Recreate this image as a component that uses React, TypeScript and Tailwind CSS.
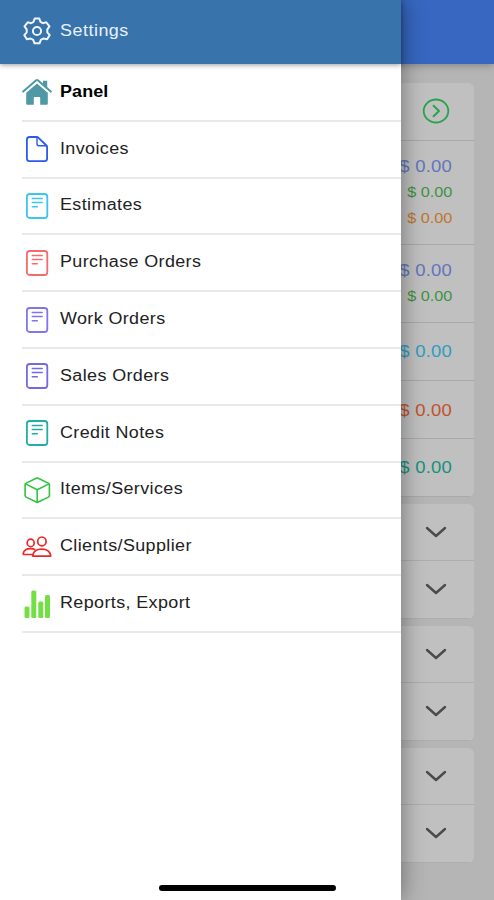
import { ReactNode } from "react"
import clsx from "clsx"

const outline = {
  viewBox: "0 0 30 30",
  fill: "none",
  stroke: "currentColor",
  strokeLinecap: "round",
  strokeLinejoin: "round",
} as const

function GearIcon() {
  return (
    <svg {...outline} strokeWidth="2" className="size-[30px] text-[#eef5fc]">
      <path d="M12.7 2.6h4.600l1.200 3.300 2.300 1.300 3.500-.9 3.200 4.100-2.200 3v3l2.400 2.700-2.600 4.200-3.800-.8-2.500 1.400-1.300 3.400h-5l-1.300-3.400-2.500-1.400-3.800.8-2.600-4.200 2.400-2.700v-3l-2.200-3 3.200-4.100 3.500.9 2.300-1.300z" />
      <circle cx="15" cy="15" r="4.1" />
    </svg>
  )
}

function HouseIcon() {
  return (
    <svg viewBox="0 0 30 30" className="size-[30px] text-[#4f98a5]">
      <path
        fill="currentColor"
        d="M15 6.600 4.200 15.800v10.700c0 .8.5 1.300 1.300 1.300h6.300v-7c0-.5.3-.8.8-.8h4.800c.5 0 .8.3.8.8v7h6.300c.8 0 1.300-.5 1.300-1.300V15.800z"
      />
      <path fill="currentColor" d="M21 3.800h4.200v8.400l-4.200-3.500z" />
      <path
        d="M1.200 14.600 13.900 3.400c.7-.6 1.500-.6 2.200 0l12.700 11.200"
        fill="none"
        stroke="currentColor"
        strokeWidth="2"
        strokeLinecap="round"
      />
      <path d="M3 15.900 15 5.500l12 10.400" fill="none" stroke="white" strokeWidth=".7" />
    </svg>
  )
}

function FileIcon() {
  return (
    <svg {...outline} strokeWidth="1.8" className="size-[30px] text-[#2b5be8]">
      <path d="M7.500 3h7.300c.6 0 1.100.2 1.500.6l8.100 7.900c.5.5.7 1 .7 1.600v11.400c0 1.600-1 2.600-2.600 2.600h-15c-1.600 0-2.600-1-2.600-2.600V5.600C4.900 4 5.900 3 7.500 3z" />
      <path d="M15 3.200v6.600c0 1.200.7 2 2 2h7.600" strokeWidth="1.400" />
    </svg>
  )
}

function DocIcon({ color }: { color: string }) {
  return (
    <svg {...outline} strokeWidth="1.8" className={clsx("size-[30px]", color)}>
      <rect x="4.9" y="3" width="20.4" height="24" rx="2.8" />
      <path d="M10.300 7.500h9.900M10.300 11.500h9.900M10.300 15.700h5" strokeWidth="1.500" />
    </svg>
  )
}

function BoxIcon() {
  return (
    <svg {...outline} strokeWidth="1.6" className="size-[30px] text-[#2fc440]">
      <path d="M14.200 3.200c.7-.3 1.300-.3 2 0l10.100 4.900c.8.4 1.100.9 1.100 1.700v10.700c0 .7-.3 1.200-1 1.600l-10.100 4.900c-.7.4-1.300.4-2 0L4.100 22.100c-.7-.4-1-.9-1-1.600V9.800c0-.8.3-1.300 1.100-1.700z" />
      <path d="m3.500 8.900 11.700 5.800 11.800-5.800M15.200 14.700V27" />
    </svg>
  )
}

function PeopleIcon() {
  return (
    <svg {...outline} strokeWidth="1.7" className="size-[30px] text-[#ee2626]">
      <ellipse cx="19.900" cy="9.400" rx="4.200" ry="4.400" />
      <path d="M11.300 24.200c-.5 0-.8-.4-.6-1 .9-3.800 4.400-6 9-6s8.100 2.200 9 6c.2.6-.1 1-.6 1z" />
      <ellipse cx="8.700" cy="10.900" rx="3.500" ry="3.700" />
      <path d="M10.400 22.500H1.900c-.5 0-.8-.4-.7-.9.6-3.200 3.700-4.900 7.500-4.900 1.600 0 2.900.2 4 .8" />
    </svg>
  )
}

function ChartIcon() {
  return (
    <svg viewBox="0 0 30 30" className="size-[30px] text-[#74df45]" fill="currentColor">
      <rect x="2.500" y="17.500" width="5" height="11.500" rx="1.500" />
      <rect x="9.300" y="1.500" width="5" height="27.500" rx="1.500" />
      <rect x="16.300" y="12.500" width="5" height="16.500" rx="1.500" />
      <rect x="23" y="6" width="5" height="23" rx="1.500" />
    </svg>
  )
}

type MenuItem = { label: string; icon: ReactNode; active?: boolean }

const menu: MenuItem[] = [
  { label: "Panel", icon: <HouseIcon />, active: true },
  { label: "Invoices", icon: <FileIcon /> },
  { label: "Estimates", icon: <DocIcon color="text-[#39c7f0]" /> },
  { label: "Purchase Orders", icon: <DocIcon color="text-[#f46b6b]" /> },
  { label: "Work Orders", icon: <DocIcon color="text-[#7f75ee]" /> },
  { label: "Sales Orders", icon: <DocIcon color="text-[#7468e8]" /> },
  { label: "Credit Notes", icon: <DocIcon color="text-[#20ada4]" /> },
  { label: "Items/Services", icon: <BoxIcon /> },
  { label: "Clients/Supplier", icon: <PeopleIcon /> },
  { label: "Reports, Export", icon: <ChartIcon /> },
]

const totals = [
  { height: "h-[104px]", main: "text-[#6375bd]", extra: ["text-[#3f9341]", "text-[#bd762f]"] },
  { height: "h-[78px]", main: "text-[#6375bd]", extra: ["text-[#3f9341]"] },
  { height: "h-[58.5px]", main: "text-[#2f9dbf]", extra: [] },
  { height: "h-[58px]", main: "text-[#c2532a]", extra: [] },
  { height: "h-[57.5px]", main: "text-[#17917e]", extra: [] },
]

const sections = ["company", "documents", "account"]

function Chevron() {
  return (
    <svg
      viewBox="0 0 22 12"
      className="mr-[27px] h-3 w-[22px]"
      fill="none"
      stroke="#4b4b4b"
      strokeWidth="2.4"
      strokeLinecap="round"
      strokeLinejoin="round"
    >
      <path d="m2 2 9 8 9-8" />
    </svg>
  )
}

function Dashboard() {
  return (
    <main className="h-[900px] bg-[#b5b5b5]">
      <div className="h-16 bg-[#3767c0] shadow-[0_1px_8px_rgba(0,0,0,0.3)]" />
      <div className="mr-[20px] pt-[19px]">
        <div className="overflow-hidden rounded-md bg-[#c0c0c0]">
          <div className="flex h-[57.5px] items-center justify-end border-b border-[#a9a9a9] pr-[24px]">
            <svg
              viewBox="0 0 28 28"
              className="size-7 text-[#28a34c]"
              fill="none"
              stroke="currentColor"
              strokeWidth="1.8"
              strokeLinecap="round"
              strokeLinejoin="round"
            >
              <ellipse cx="14" cy="14" rx="12.3" ry="11.5" />
              <path d="m11.600 8.800 5.400 5.200-5.400 5.200" strokeWidth="2" />
            </svg>
          </div>
          {totals.map((row, i) => (
            <div
              key={i}
              className={clsx(
                "flex flex-col items-end justify-center border-b border-[#a9a9a9] pr-[22px] whitespace-nowrap",
                row.height,
              )}
            >
              <span className={clsx("origin-right scale-x-[1.12] text-[16.5px] leading-[26px] tracking-[0.2px]", row.main)}>
                $ 0.00
              </span>
              {row.extra.map((color) => (
                <span key={color} className={clsx("origin-right scale-x-[1.12] text-[14.5px] leading-[26px]", color)}>
                  $ 0.00
                </span>
              ))}
            </div>
          ))}
        </div>
        {sections.map((section) => (
          <div key={section} className="mt-[7px] overflow-hidden rounded-md bg-[#c0c0c0]">
            <div className="flex h-[57.5px] items-center justify-end border-b border-[#aeaeae]">
              <Chevron />
            </div>
            <div className="flex h-[57.5px] items-center justify-end border-b border-[#aeaeae]">
              <Chevron />
            </div>
          </div>
        ))}
      </div>
    </main>
  )
}

function Drawer() {
  return (
    <aside className="absolute inset-y-0 left-0 w-[401px] bg-white shadow-[1px_0_22px_rgba(0,0,0,0.4)]">
      <div className="flex h-16 items-center gap-[8px] bg-[#3973ac] pb-[2px] pl-[22px] shadow-[0_1px_5px_rgba(0,0,0,0.4)]">
        <GearIcon />
        <span className="origin-left scale-x-[1.12] text-[16px] tracking-[0.45px] text-[#e8f1fa]">Settings</span>
      </div>
      <nav className="pt-px pl-[22px]">
        {menu.map((item) => (
          <div key={item.label} className="flex h-[56.8px] items-center gap-[8px] border-b-2 border-[#e9e9e9]">
            {item.icon}
            <span
              className={clsx(
                "origin-left scale-x-[1.12] pb-px text-[16px] whitespace-nowrap",
                item.active ? "tracking-[0.1px] font-bold text-black" : "tracking-[0.35px] text-[#222]",
              )}
            >
              {item.label}
            </span>
          </div>
        ))}
      </nav>
    </aside>
  )
}

export default function App() {
  return (
    <div className="relative h-[900px] w-full overflow-hidden font-['Liberation_Sans',Arial,sans-serif]">
      <Dashboard />
      <Drawer />
      <div className="absolute bottom-[9px] left-[159px] h-[6px] w-[177px] rounded-full bg-black" />
    </div>
  )
}
